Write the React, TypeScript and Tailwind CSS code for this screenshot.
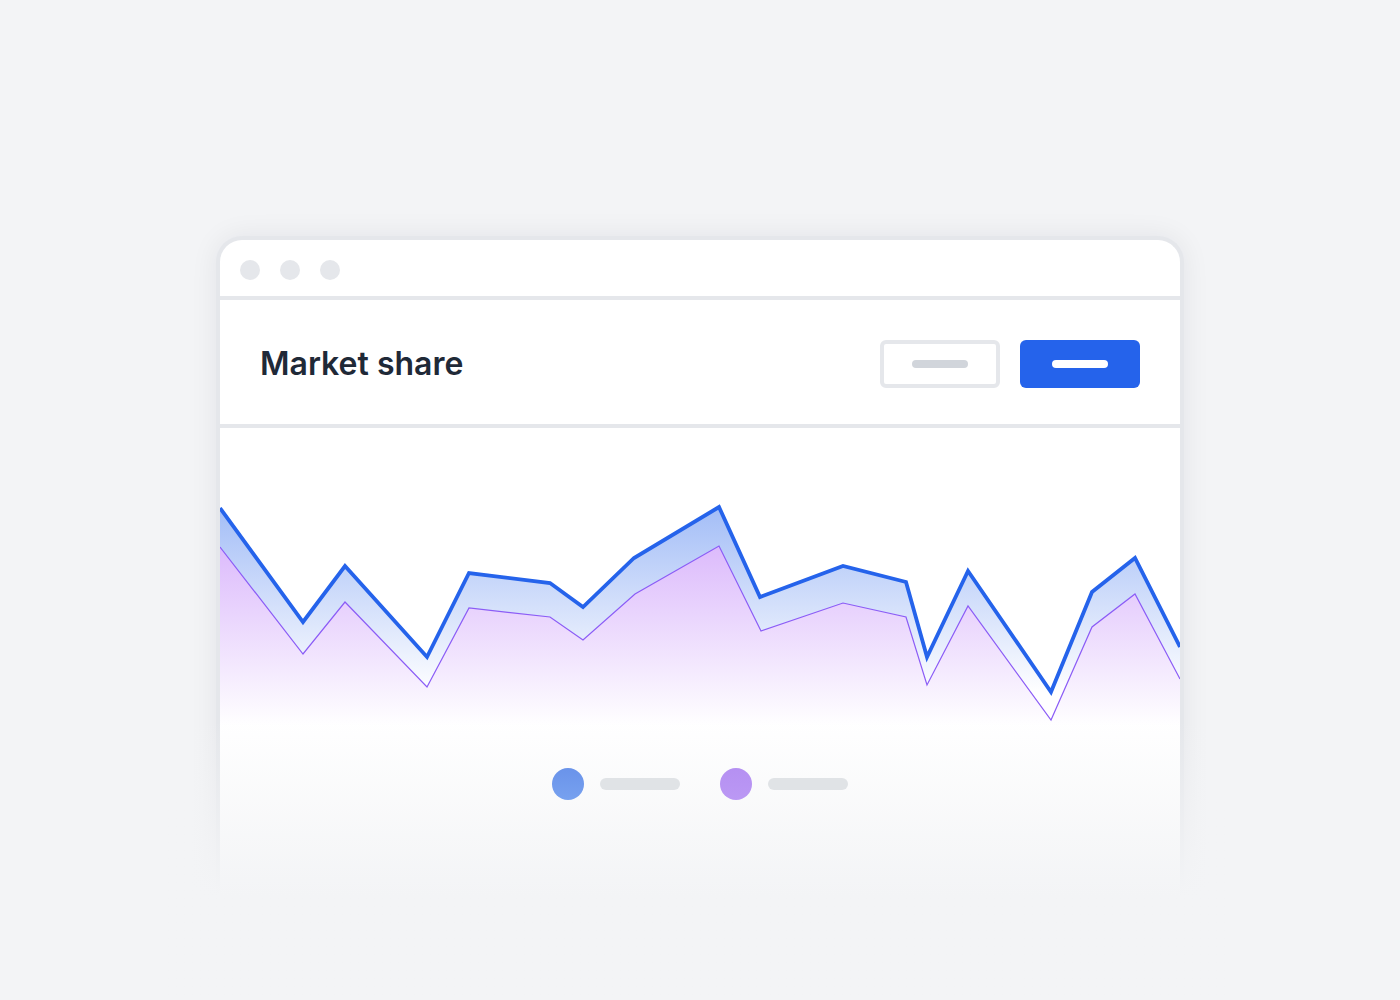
import React from 'react';

const blue = '0,80 83,194 125,138 207,229 249,145 330,155 363,179 414,130 499,79 540,169 623,138 686,154 707,229 748,143 831,264 872,164 915,130 960,219';
const purple = '0,119 83,226 125,174 207,259 249,180 330,189 363,212 415,166 499,118 541,203 623,175 686,189 707,257 748,178 831,292 872,199 915,166 960,251';

const Chart = () => {
	return (
		<svg width="960" height="300" viewBox="0 0 960 300" className="block">
			<defs>
				<linearGradient id="blueFill" gradientUnits="userSpaceOnUse" x1="0" y1="80" x2="0" y2="265">
					<stop offset="0" stopColor="#2563eb" stopOpacity="0.42" />
					<stop offset="1" stopColor="#2563eb" stopOpacity="0" />
				</linearGradient>
				<linearGradient id="purpleFill" gradientUnits="userSpaceOnUse" x1="0" y1="119" x2="0" y2="298">
					<stop offset="0" stopColor="#a855f7" stopOpacity="0.4" />
					<stop offset="0.75" stopColor="#a855f7" stopOpacity="0.1" />
					<stop offset="1" stopColor="#a855f7" stopOpacity="0" />
				</linearGradient>
			</defs>
			<polygon points={`${blue} 960,300 0,300`} fill="url(#blueFill)" />
			<polygon points={`${purple} 960,300 0,300`} fill="#ffffff" />
			<polygon points={`${purple} 960,300 0,300`} fill="url(#purpleFill)" />
			<polyline points={purple} fill="none" stroke="#8b5cf6" strokeWidth="1.2" />
			<polyline points={blue} fill="none" stroke="#2563eb" strokeWidth="3.8" strokeLinejoin="miter" />
		</svg>
	);
};

const App = () => {
	return (
		<div className="h-[1000px] overflow-hidden bg-[#f3f4f6] flex justify-center pt-[236px]" style={{ fontFamily: 'Inter, "Noto Sans", sans-serif' }}>
			<div className="relative w-[968px] h-[900px]">
				<div className="h-full border-4 border-b-0 border-[#e5e7eb] rounded-t-[26px] bg-white shadow-[0_0_28px_rgba(17,24,39,0.07)] overflow-hidden">
					<div className="h-[60px] flex items-start pt-5 gap-5 pl-5 border-b-4 border-[#e5e7eb]">
						<span className="w-5 h-5 rounded-full bg-[#e5e7eb]" />
						<span className="w-5 h-5 rounded-full bg-[#e5e7eb]" />
						<span className="w-5 h-5 rounded-full bg-[#e5e7eb]" />
					</div>
					<div className="h-[128px] flex items-center justify-between px-10 pt-[4px] border-b-4 border-[#e5e7eb]">
						<h1 className="text-[32px] leading-none font-semibold text-[#1f2937]">Market share</h1>
						<div className="flex gap-5">
							<div className="w-[120px] h-12 rounded-md border-4 border-[#e5e7eb] flex items-center justify-center">
								<span className="w-14 h-2 rounded-full bg-[#d1d5db]" />
							</div>
							<div className="w-[120px] h-12 rounded-md bg-[#2563eb] flex items-center justify-center">
								<span className="w-14 h-2 rounded-full bg-white" />
							</div>
						</div>
					</div>
					<Chart />
				</div>
				<div className="absolute -left-12 -right-12 top-[484px] h-[320px] bg-linear-to-b from-[#f3f4f6]/0 to-[#f3f4f6] to-55%" />
				<div className="absolute left-0 right-0 top-[532px] flex justify-center items-center">
					<span className="w-8 h-8 rounded-full bg-linear-to-b from-[#6a93ea] to-[#77a1ef]" />
					<span className="ml-4 w-20 h-3 rounded-full bg-[#e0e3e6]" />
					<span className="ml-10 w-8 h-8 rounded-full bg-linear-to-b from-[#b590f2] to-[#bb98f4]" />
					<span className="ml-4 w-20 h-3 rounded-full bg-[#e0e3e6]" />
				</div>
			</div>
		</div>
	);
};

export default App;
